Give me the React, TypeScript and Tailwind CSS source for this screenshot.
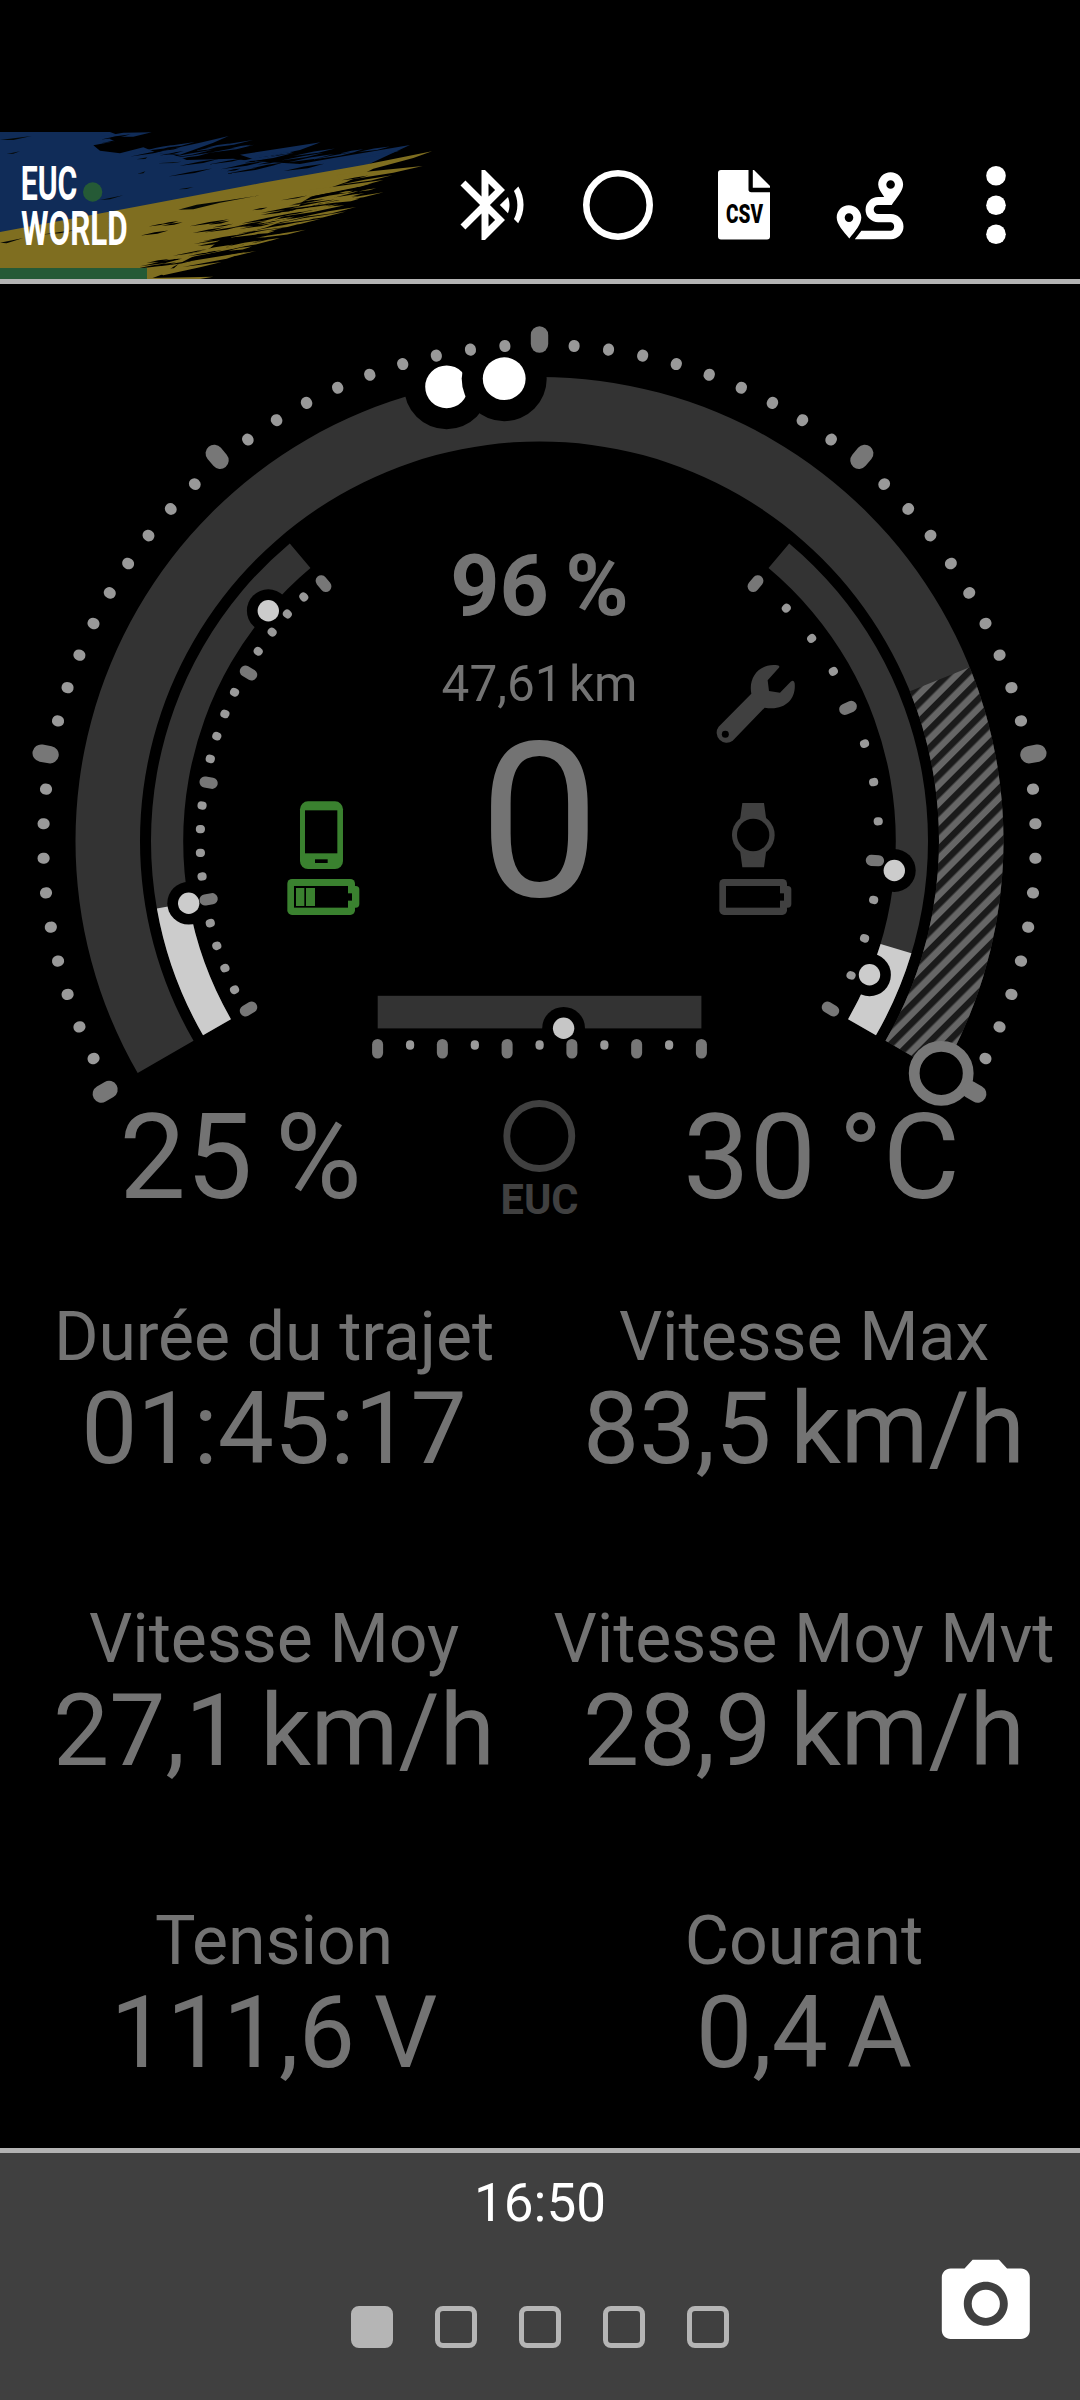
import type { ReactNode } from "react";

type Point = { x: number; y: number };
type Stat = { label: string; value: string };

const CX = 539.5;
const CY = 841;

const stats: Stat[] = [
  { label: "Durée du trajet", value: "01:45:17" },
  { label: "Vitesse Max", value: "83,5 km/h" },
  { label: "Vitesse Moy", value: "27,1 km/h" },
  { label: "Vitesse Moy Mvt", value: "28,9 km/h" },
  { label: "Tension", value: "111,6 V" },
  { label: "Courant", value: "0,4 A" },
];

const pages = [0, 1, 2, 3, 4];

function polar(r: number, deg: number): Point {
  const rad = (deg * Math.PI) / 180;
  return { x: CX + r * Math.cos(rad), y: CY + r * Math.sin(rad) };
}

function band(inner: number, outer: number, from: number, to: number) {
  const a = polar(outer, from);
  const b = polar(outer, to);
  const c = polar(inner, to);
  const d = polar(inner, from);
  const large = to - from > 180 ? 1 : 0;
  return `M${a.x} ${a.y}A${outer} ${outer} 0 ${large} 1 ${b.x} ${b.y}L${c.x} ${c.y}A${inner} ${inner} 0 ${large} 0 ${d.x} ${d.y}Z`;
}

export default function App() {
  return (
    <div className="flex h-[2400px] w-[1080px] flex-col overflow-hidden bg-black font-[Roboto,sans-serif] text-[#737373]">
      <Header />
      <Gauge />
      <main className="grid flex-1 grid-cols-2 grid-rows-[302px_302px_auto] pl-[9px] pr-[11px]">
        {stats.map((stat) => (
          <div key={stat.label} className="flex flex-col items-center whitespace-nowrap">
            <div className="text-[68px] leading-[80px] tracking-[-0.1px]">{stat.label}</div>
            <div className="text-[100px] leading-[104px] [word-spacing:-6px]">{stat.value}</div>
          </div>
        ))}
      </main>
      <Footer />
    </div>
  );
}

function Header() {
  return (
    <header className="flex h-[284px] items-end justify-between border-b-[5px] border-[#b3b3b3]">
      <Banner />
      <div className="mb-[32px] mr-[42px] flex h-[84px] gap-[42px]">
        <HeaderIcon>
          <path
            transform="scale(3.5)"
            d="M14.24 12.01l2.32 2.32c.28-.72.44-1.51.44-2.33 0-.82-.16-1.59-.43-2.31l-2.33 2.32zm5.29-5.3l-1.26 1.26c.63 1.21.98 2.57.98 4.02s-.36 2.82-.98 4.02l1.2 1.2c.97-1.54 1.54-3.36 1.54-5.31-.01-1.89-.55-3.67-1.48-5.19zm-3.82 1L10 2H9v7.59L4.41 5 3 6.41 8.59 12 3 17.59 4.41 19 9 14.41V22h1l5.71-5.71-4.3-4.29 4.3-4.29zM11 5.83l1.88 1.88L11 9.59V5.83zm1.88 10.46L11 18.17v-3.76l1.88 1.88z"
          />
        </HeaderIcon>
        <HeaderIcon>
          <circle cx="42" cy="42" r="31.7" fill="none" stroke="#fff" strokeWidth="6.6" />
        </HeaderIcon>
        <HeaderIcon>
          <path d="M19 7H46.5V26.5Q46.5 29.3 49.3 29.3H68V73.5Q68 76.4 65 76.4H19Q16 76.4 16 73.5V10Q16 7 19 7Z" />
          <path d="M50.8 7H52L68 23V24.8H50.8Z" />
          <text x="24" y="59.5" fill="#000" fontSize="26" fontWeight="900" textLength="37" lengthAdjust="spacingAndGlyphs">
            CSV
          </text>
        </HeaderIcon>
        <HeaderIcon>
          <path fillRule="evenodd" d="M20.8 42.2C27.5 42.2 33.3 47.6 33.3 54.5C33.3 61.5 27 68.5 21.3 75.4C15.5 68.5 8.7 61.5 8.7 54.5C8.7 47.6 14 42.2 20.8 42.2ZM21 50.3a4.3 4.3 0 1 0 0 8.6a4.3 4.3 0 1 0 0-8.6Z" />
          <path fillRule="evenodd" d="M62.6 9.2C69.3 9.2 75.1 14.6 75.1 21.6C75.1 28 68.5 35 63.7 42H50.2A4.4 4.4 0 0 0 50.2 51H62.9A12.6 12.6 0 0 1 62.9 76.2H26.8L33.4 67.8H62.9A4.4 4.4 0 0 0 62.9 59.3H50.2A12.6 12.6 0 0 1 50.2 34H56.2C53 29.5 50.2 25.5 50.2 21.6C50.2 14.6 55.9 9.2 62.6 9.2ZM62.6 17.2a4.3 4.3 0 1 0 0 8.6a4.3 4.3 0 1 0 0-8.6Z" />
        </HeaderIcon>
        <HeaderIcon>
          <circle cx="42" cy="12.8" r="9.8" />
          <circle cx="42" cy="42.2" r="9.8" />
          <circle cx="42" cy="71.2" r="9.8" />
        </HeaderIcon>
      </div>
    </header>
  );
}

function HeaderIcon({ children }: { children: ReactNode }) {
  return (
    <svg className="size-[84px]" viewBox="0 0 84 84" fill="#fff">
      {children}
    </svg>
  );
}

const BLUE = "#102c58";
const GOLD = "#7f6e20";

// Thin dry-brush slivers scattered along an edge, all leaning the same way.
function slivers(from: Point, to: Point, spread: number, count: number, seed: number, maxLength: number) {
  let s = seed;
  const rand = () => {
    s = (s * 16807) % 2147483647;
    return s / 2147483647;
  };
  rand();
  return Array.from({ length: count }, () => {
    const t = rand();
    const x = from.x + (to.x - from.x) * t;
    const y = from.y + (to.y - from.y) * t + (rand() - 0.5) * spread;
    const len = 40 + rand() * maxLength;
    const w = 2 + rand() * 3;
    const rise = len * 0.18;
    return `M${x - len / 2} ${y + rise / 2}L${x} ${y - w / 2}L${x + len / 2} ${y - rise / 2}L${x + len * 0.1} ${y + w / 2}Z`;
  }).join("");
}

const brush = [
  { d: slivers({ x: 560, y: 140 }, { x: 1000, y: 120 }, 40, 18, 11, 110), color: "#000" },
  { d: slivers({ x: 340, y: 66 }, { x: 560, y: 106 }, 40, 8, 23, 80), color: "#000" },
  { d: slivers({ x: 420, y: 90 }, { x: 820, y: 94 }, 50, 16, 37, 130), color: BLUE },
  { d: slivers({ x: 800, y: 110 }, { x: 1140, y: 94 }, 22, 10, 41, 120), color: BLUE },
  { d: slivers({ x: 560, y: 420 }, { x: 1080, y: 190 }, 50, 30, 53, 130), color: "#000" },
  { d: slivers({ x: 620, y: 340 }, { x: 960, y: 200 }, 70, 10, 61, 80), color: "#000" },
  { d: slivers({ x: 600, y: 430 }, { x: 1120, y: 190 }, 60, 46, 79, 140), color: GOLD },
  { d: slivers({ x: 440, y: 340 }, { x: 540, y: 320 }, 60, 4, 97, 50), color: "#000" },
  { d: slivers({ x: 440, y: 432 }, { x: 560, y: 420 }, 30, 6, 101, 90), color: "#000" },
];

function Banner() {
  return (
    <svg className="h-[147px] w-[450px]" viewBox="0 36 1350 441">
      <path
        fill={BLUE}
        d="M0 36H330L352 44L328 56L345 64L280 76L300 92L360 100L430 82L470 98L520 104L560 120L700 116L760 124L840 128L900 132L1000 114L1230 75L1180 98L1090 140L780 192L400 266L0 340Z"
      />
      <path fill={BLUE} d="M300 50L370 38L455 37L400 50ZM460 98L600 68L686 48L640 68L540 104ZM720 104L850 84L962 67L900 90L760 118Z" />
      <path
        fill={GOLD}
        d="M0 336L400 262L780 190L1090 135L1296 94L1240 114L1120 146L1040 186L960 214L910 244L880 276L800 310L730 336L660 360L620 392L570 414L520 440L490 462L450 477H0Z"
      />
      <path
        fill={GOLD}
        d="M1010 164L1268 138L1180 158L1020 184ZM900 214L1150 180L1060 204L900 236ZM830 270L1034 256L940 276L800 296ZM660 346L880 292L800 322L650 362ZM600 392L780 369L700 386L570 412ZM540 428L740 396L680 416L520 446ZM460 452L665 426L600 442L490 466ZM450 474L640 470L600 477H450Z"
      />
      {brush.map(({ d, color }) => (
        <path key={d} d={d} fill={color} />
      ))}
      <path
        fill="#050805"
        d="M535 269L590 254L690 240L780 226L660 248L580 268ZM535 208L580 201L560 207ZM470 130L545 125L520 129ZM410 118L442 112L436 117ZM412 162L436 154L430 160ZM0 368L70 354L20 370ZM120 344L240 328L180 340ZM0 60L95 48L40 60ZM20 102L60 94L40 101ZM300 240L370 226L330 238Z"
      />
      <rect y="444" width="441" height="33" fill="#255a36" />
      <circle cx="278" cy="216" r="29" fill="#255a36" />
      <g fill="#fff" fontWeight="700" fontSize="143">
        <text x="62" y="241" textLength="170" lengthAdjust="spacingAndGlyphs">
          EUC
        </text>
        <text x="63" y="374" textLength="320" lengthAdjust="spacingAndGlyphs">
          WORLD
        </text>
      </g>
    </svg>
  );
}

function Tick({ r1, r2, deg, width, color }: { r1: number; r2: number; deg: number; width: number; color: string }) {
  const a = polar(r1, deg);
  const b = polar(r2, deg);
  return <line x1={a.x} y1={a.y} x2={b.x} y2={b.y} stroke={color} strokeWidth={width} strokeLinecap="round" />;
}

function Marker({ x, y, r = 10.7, halo = 21.4, fill = "#ccc" }: Point & { r?: number; halo?: number; fill?: string }) {
  return (
    <>
      <circle cx={x} cy={y} r={halo} fill="#000" />
      <circle cx={x} cy={y} r={r} fill={fill} />
    </>
  );
}

function Gauge() {
  return (
    <svg className="h-[1013px] w-[1080px] shrink-0" viewBox="0 284 1080 1013">
      <defs>
        <pattern id="hatch" width="13" height="13" patternUnits="userSpaceOnUse" patternTransform="rotate(45)">
          <rect width="13" height="13" fill="#1a1a1a" />
          <rect x="6.5" width="6.5" height="13" fill="#666" />
        </pattern>
      </defs>

      {/* speed */}
      <path d={band(399.5, 464, 150, 390)} fill="#333" />
      <path d={band(399.5, 464, 338, 390)} fill="url(#hatch)" />
      <Marker x={446.6} y={386.8} r={21.4} halo={42.5} fill="#fff" />
      <Marker x={504.2} y={378.7} r={21.4} halo={42.5} fill="#fff" />
      <circle cx="941.2" cy="1073.3" r="27" fill="#000" stroke="#777" strokeWidth="10.8" />
      {Array.from({ length: 61 }, (_, i) =>
        i % 10 === 0 ? (
          <Tick key={i} r1={497} r2={506} deg={150 + i * 4} width={17.4} color="#777" />
        ) : (
          <Tick key={i} r1={495.6} r2={496.8} deg={150 + i * 4} width={11} color="#999" />
        ),
      )}

      {/* battery */}
      <path d={band(356.3, 388.5, 150, 230)} fill="#333" />
      <path d={band(356.3, 388.5, 150, 170)} fill="#ccc" />
      <Marker x={188.7} y={903.2} />
      <Marker x={268.3} y={610.7} />
      {Array.from({ length: 21 }, (_, i) =>
        i % 5 === 0 ? (
          <Tick key={i} r1={332.4} r2={339.6} deg={150 + i * 4} width={11.2} color="#777" />
        ) : (
          <Tick key={i} r1={338.8} r2={339.8} deg={150 + i * 4} width={8.2} color="#999" />
        ),
      )}

      {/* temperature */}
      <path d={band(356.3, 388.5, -50, 30)} fill="#333" />
      <path d={band(356.3, 388.5, 16.8, 30)} fill="#ccc" />
      <Marker x={894.3} y={870.5} />
      <Marker x={869.5} y={974.8} />
      {Array.from({ length: 13 }, (_, i) =>
        i % 4 === 0 ? (
          <Tick key={i} r1={332.4} r2={339.6} deg={30 - i * (20 / 3)} width={11.2} color="#777" />
        ) : (
          <Tick key={i} r1={338.8} r2={339.8} deg={30 - i * (20 / 3)} width={8.2} color="#999" />
        ),
      )}

      {/* current */}
      <rect x="377.7" y="995.8" width="323.7" height="32.6" fill="#333" />
      <Marker x={563.6} y={1028.3} fill="#c6c6c6" />
      {Array.from({ length: 11 }, (_, i) =>
        i % 2 === 0 ? (
          <rect key={i} x={372.1 + i * 32.38} y="1039" width="11" height="19.6" rx="5.5" fill="#777" />
        ) : (
          <rect key={i} x={373.6 + i * 32.38} y="1040.2" width="8.2" height="9.6" rx="4.1" fill="#999" />
        ),
      )}

      <g fill="#737373" textAnchor="middle">
        <text x="539.5" y="614.5" fontSize="86" fontWeight="700" className="[word-spacing:-5px]">
          96 %
        </text>
        <text x="539.5" y="701" fontSize="49.5" className="[word-spacing:-6px]">
          47,61 km
        </text>
        <text x="539.5" y="895.5" fontSize="215">
          0
        </text>
        <text x="240.5" y="1198" fontSize="118.5" className="[word-spacing:-7px]">
          25 %
        </text>
        <text x="821.5" y="1198" fontSize="118.5" className="[word-spacing:-7px]">
          30 °C
        </text>
      </g>

      <Phone />
      <Battery x={270} y={780} color="#3a812f" bars />
      <Wrench />
      <Watch />
      <Battery x={702} y={780} color="#404040" />

      <circle cx="539.3" cy="1136" r="32.5" fill="none" stroke="#404040" strokeWidth="6.8" />
      <text x="500.5" y="1214" fontSize="42" fontWeight="700" fill="#404040" textLength="78" lengthAdjust="spacingAndGlyphs">
        EUC
      </text>
    </svg>
  );
}

function Battery({ x, y, color, bars }: { x: number; y: number; color: string; bars?: boolean }) {
  return (
    <g transform={`translate(${x} ${y}) scale(0.3333)`} fill={color}>
      <rect x="52" y="297" width="203" height="108" rx="14" />
      <rect x="230" y="318" width="38" height="65" rx="11" />
      <rect x="72" y="318" width="162" height="65" fill="#000" />
      <rect x="233" y="340" width="13" height="22" fill="#000" />
      {bars && <path d="M78 324h25v54h-25zM108 324h27v54h-27z" />}
    </g>
  );
}

function Phone() {
  return (
    <g transform="translate(270 780) scale(0.3333)" fill="#3a812f">
      <rect x="90" y="64" width="129" height="203" rx="24" />
      <rect x="105" y="91" width="97" height="129" fill="#000" />
      <rect x="135" y="238" width="38" height="11" fill="#000" />
    </g>
  );
}

function Wrench() {
  return (
    <g transform="translate(690 640) scale(0.3333)" fill="#404040">
      <path d="M266 84L233 121L237 153L270 158L302 125Q312 117 314 130C319 178 284 214 224 203L128 302A30 30 0 0 1 86 260L184 161C174 108 212 69 262 76Q272 78 266 84Z" />
      <circle cx="106" cy="283" r="10.5" fill="#000" />
    </g>
  );
}

function Watch() {
  return (
    <g transform="translate(690 640) scale(0.3333)" fill="#404040">
      <path d="M157 489H222L229 540H150ZM150 630H229L222 682H157Z" />
      <circle cx="190" cy="585" r="64" />
      <circle cx="189.5" cy="585" r="48.5" fill="#000" />
    </g>
  );
}

function Footer() {
  return (
    <footer className="flex h-[252px] flex-col border-t-[5px] border-[#b3b3b3] bg-[#404040]">
      <div className="mt-[18px] text-center text-[53px] leading-[64px] text-white">16:50</div>
      <div className="mt-[15px] grid grid-cols-[1fr_auto_1fr] items-start">
        <div />
        <div className="mt-[56px] flex gap-[42px]">
          {pages.map((page) => (
            <div
              key={page}
              className={`size-[42px] rounded-[8px] border-[5px] border-[#b5b5b5] ${page === 0 ? "bg-[#b5b5b5]" : ""}`}
            />
          ))}
        </div>
        <svg className="mr-[41.5px] mt-[0.5px] size-[105.6px] justify-self-end" viewBox="0 0 24 24" fill="#fff">
          <circle cx="12" cy="12" r="3.2" />
          <path d="M9 2L7.17 4H4c-1.1 0-2 .9-2 2v12c0 1.1.9 2 2 2h16c1.1 0 2-.9 2-2V6c0-1.1-.9-2-2-2h-3.17L15 2H9zm3 15c-2.76 0-5-2.24-5-5s2.24-5 5-5 5 2.24 5 5-2.24 5-5 5z" />
        </svg>
      </div>
    </footer>
  );
}
